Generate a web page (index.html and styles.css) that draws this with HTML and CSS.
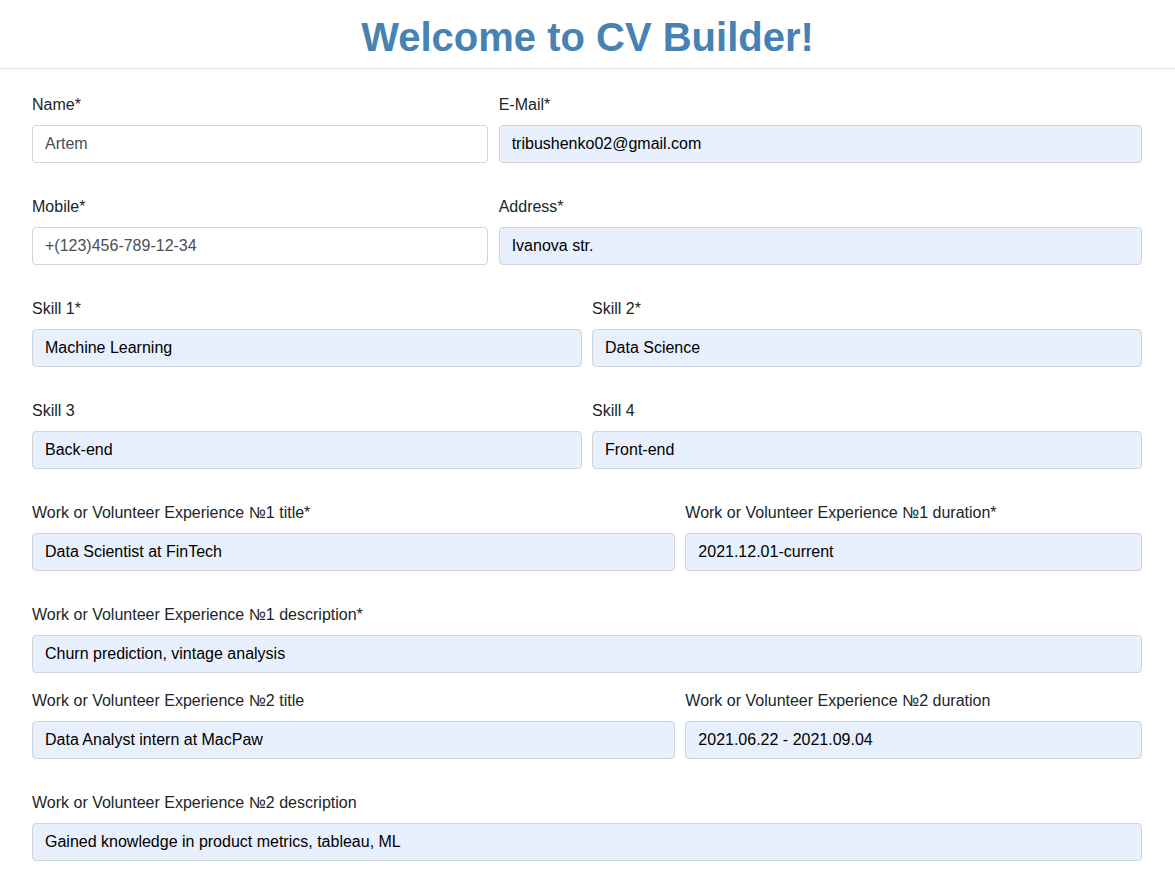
FILE: index.html
```html
<!DOCTYPE html>
<html lang="en">
<head>
<meta charset="utf-8">
<title>CV Builder</title>
<link rel="stylesheet" href="styles.css">
</head>
<body>
<header class="header">
  <h1 class="title">Welcome to CV Builder!</h1>
</header>
<main class="form">
  <div class="row">
    <div class="field span-5"><label>Name*</label><input class="control" value="Artem"></div>
    <div class="field span-7"><label>E-Mail*</label><input class="control filled" value="tribushenko02@gmail.com"></div>
  </div>
  <div class="row">
    <div class="field span-5"><label>Mobile*</label><input class="control" value="+(123)456-789-12-34"></div>
    <div class="field span-7"><label>Address*</label><input class="control filled" value="Ivanova str."></div>
  </div>
  <div class="row">
    <div class="field span-6"><label>Skill 1*</label><input class="control filled" value="Machine Learning"></div>
    <div class="field span-6"><label>Skill 2*</label><input class="control filled" value="Data Science"></div>
  </div>
  <div class="row">
    <div class="field span-6"><label>Skill 3</label><input class="control filled" value="Back-end"></div>
    <div class="field span-6"><label>Skill 4</label><input class="control filled" value="Front-end"></div>
  </div>
  <div class="row">
    <div class="field span-7"><label>Work or Volunteer Experience №1 title*</label><input class="control filled" value="Data Scientist at FinTech"></div>
    <div class="field span-5"><label>Work or Volunteer Experience №1 duration*</label><input class="control filled" value="2021.12.01-current"></div>
  </div>
  <div class="row tight">
    <div class="field span-12"><label>Work or Volunteer Experience №1 description*</label><input class="control filled" value="Churn prediction, vintage analysis"></div>
  </div>
  <div class="row">
    <div class="field span-7"><label>Work or Volunteer Experience №2 title</label><input class="control filled" value="Data Analyst intern at MacPaw"></div>
    <div class="field span-5"><label>Work or Volunteer Experience №2 duration</label><input class="control filled" value="2021.06.22 - 2021.09.04"></div>
  </div>
  <div class="row">
    <div class="field span-12"><label>Work or Volunteer Experience №2 description</label><input class="control filled" value="Gained knowledge in product metrics, tableau, ML"></div>
  </div>
</main>
</body>
</html>
```
FILE: styles.css
```css
* { box-sizing: border-box; }
html, body { margin: 0; padding: 0; }
body {
  font-family: "Liberation Sans", Arial, sans-serif;
  font-size: 16px;
  line-height: 1.5;
  color: #212529;
  background: #fff;
}
.header {
  padding-top: 13px;
  border-bottom: 1px solid #dee2e6;
  text-align: center;
}
.title {
  margin: 0 0 7px;
  font-size: 40px;
  line-height: 48px;
  font-weight: 700;
  color: #4682b4;
}
.form {
  padding: 24px 33.5px 0 32px;
}
.row {
  display: grid;
  grid-template-columns: repeat(12, 1fr);
  column-gap: 10.5px;
  margin-bottom: 32px;
}
.row.tight { margin-bottom: 16px; }
.span-5 { grid-column: span 5; }
.span-6 { grid-column: span 6; }
.span-7 { grid-column: span 7; }
.span-12 { grid-column: span 12; }
.field label {
  display: block;
  margin-bottom: 8px;
  line-height: 24px;
}
.control {
  display: block;
  width: 100%;
  height: 38px;
  padding: 6px 12px;
  font-family: inherit;
  font-size: 16px;
  line-height: 24px;
  color: #495057;
  background: #fff;
  border: 1px solid #ced4da;
  border-radius: 4px;
  outline: none;
}
.control.filled {
  background: #e8f0fe;
  color: #000;
}
```
